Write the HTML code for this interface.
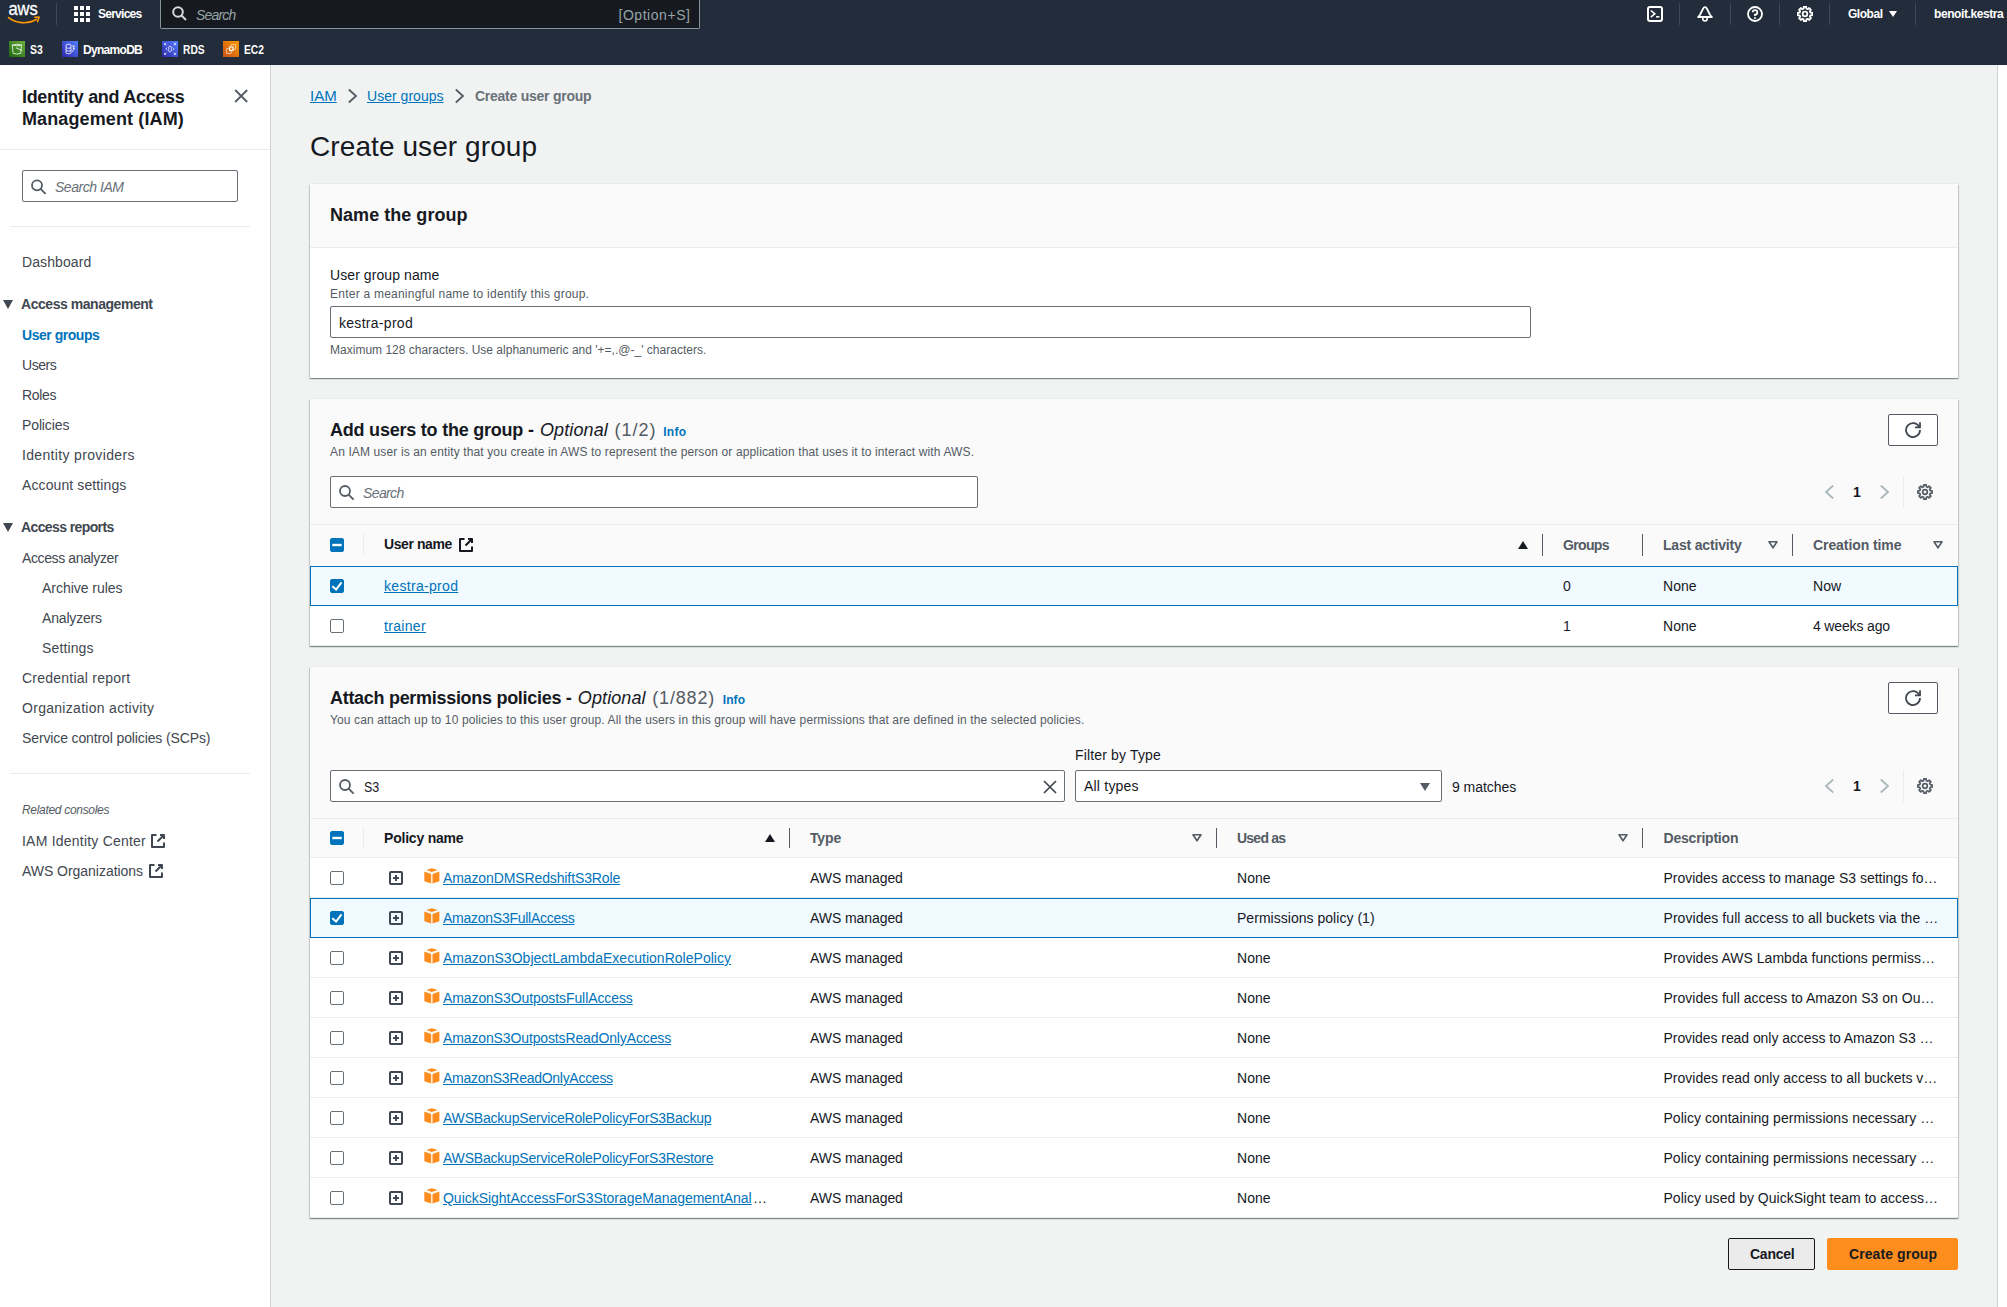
<!DOCTYPE html>
<html>
<head>
<meta charset="utf-8">
<title>Create user group | IAM</title>
<style>
*{box-sizing:border-box;margin:0;padding:0}
html,body{width:2007px;height:1307px;overflow:hidden;background:#f1f3f2;font-family:"Liberation Sans",sans-serif;font-size:14px;color:#16191f}
.abs{position:absolute;white-space:nowrap}
a{color:#0073bb;text-decoration:underline}
/* ---------- top nav ---------- */
#nav{position:absolute;left:0;top:0;width:2007px;height:65px;background:#222c3a}
#nav .t{position:absolute;color:#fff;font-weight:bold;font-size:12px;line-height:16px;white-space:nowrap}
#nav .sep{position:absolute;width:1px;background:#3c4757}
#srch{position:absolute;left:160px;top:0;width:540px;height:29px;background:#16191f;border:1px solid #879596;border-top:none;border-radius:0 0 2px 2px}
/* ---------- sidebar ---------- */
#side{position:absolute;left:0;top:65px;width:271px;height:1242px;background:#fff;border-right:1px solid #cdd2d4}
#side .it{position:absolute;left:22px;font-size:14px;line-height:20px;color:#414750;white-space:nowrap}
#side .hd{position:absolute;left:21px;font-size:14px;line-height:20px;color:#414750;font-weight:bold;white-space:nowrap}
#side .hr{position:absolute;height:1px;background:#eaeded}
.tri{position:absolute;width:0;height:0;border-left:5.5px solid transparent;border-right:5.5px solid transparent;border-top:9px solid #414750}
/* ---------- right strip ---------- */
#rstrip{position:absolute;left:1997px;top:65px;width:10px;height:1242px;background:#fff;border-left:1px solid #cdd2d4}
/* ---------- cards ---------- */
.card{position:absolute;left:310px;width:1648px;background:#fff;box-shadow:0 -1px 0 0 #e9ecec,0 1px 1px 0 rgba(0,28,36,.28),1px 1px 1px 0 rgba(0,28,36,.15),-1px 1px 1px 0 rgba(0,28,36,.15)}
.chead{position:absolute;left:0;top:0;width:100%;background:#fafafa;border-bottom:1px solid #eaeded}
.h2{position:absolute;font-size:18px;line-height:22px;font-weight:bold;color:#16191f;white-space:nowrap}
.h2 i{font-weight:normal}
.h2 .cnt{font-weight:normal;color:#545b64}
.info{position:absolute;font-size:12px;font-weight:bold;color:#0073bb;white-space:nowrap}
.desc{position:absolute;font-size:12px;line-height:16px;color:#545b64;white-space:nowrap}
.inp{position:absolute;height:31px;background:#fff;border:1px solid #687078;border-radius:2px}
.btn{position:absolute;border:1px solid #545b64;border-radius:2px;background:#fff}
.th{position:absolute;font-weight:bold;font-size:14px;line-height:20px;color:#545b64;white-space:nowrap}
.th.dk{color:#16191f}
.td{position:absolute;font-size:14px;line-height:20px;color:#16191f;white-space:nowrap}
.vsep{position:absolute;width:1px;height:20px;background:#545b64}
.row{position:absolute;left:0;width:1648px;height:40px;border-bottom:1px solid #eaeded;background:#fff}
.row.sel{background:#f1faff;border:1px solid #0073bb;z-index:2}
.cb{position:absolute;width:14px;height:14px;border:1px solid #687078;border-radius:2px;background:#fff}
.cb.on{background:#0073bb;border-color:#0073bb}
.up{position:absolute;width:0;height:0;border-left:5px solid transparent;border-right:5px solid transparent;border-bottom:8px solid #16191f}
</style>
</head>
<body>
<div id="nav">
<svg class="abs" style="left:6px;top:0px" width="36" height="28" viewBox="0 0 36 28">
<text x="2.400" y="15" font-family="Liberation Sans" font-size="19" fill="#fff" stroke="#fff" stroke-width="0.300" textLength="29.500" lengthAdjust="spacingAndGlyphs">aws</text>
<path d="M2.600 17.600 C9 22.800 21 25.200 30.500 19.300" stroke="#f90" stroke-width="1.700" fill="none" stroke-linecap="round"/>
<path d="M28.800 17.300 L33.200 17.100 L31.600 21.800" stroke="#f90" stroke-width="1.500" fill="none" stroke-linecap="round" stroke-linejoin="round"/>
</svg>
<div class="sep" style="left:56px;top:3px;height:22px"></div>
<div class="sep" style="left:1679px;top:3px;height:22px"></div>
<div class="sep" style="left:1730px;top:3px;height:22px"></div>
<div class="sep" style="left:1779px;top:3px;height:22px"></div>
<div class="sep" style="left:1829px;top:3px;height:22px"></div>
<div class="sep" style="left:1915px;top:3px;height:22px"></div>
<svg class="abs" style="left:74px;top:6px" width="16" height="16" viewBox="0 0 16 16" fill="#fff">
<rect x="0" y="0" width="4" height="4"/><rect x="6" y="0" width="4" height="4"/><rect x="12" y="0" width="4" height="4"/>
<rect x="0" y="6" width="4" height="4"/><rect x="6" y="6" width="4" height="4"/><rect x="12" y="6" width="4" height="4"/>
<rect x="0" y="12" width="4" height="4"/><rect x="6" y="12" width="4" height="4"/><rect x="12" y="12" width="4" height="4"/>
</svg>
<div class="t" style="left:98px;top:6px;letter-spacing:-0.743px">Services</div>
<div id="srch">
<svg class="abs" style="left:11px;top:6px" width="16" height="16" viewBox="0 0 16 16" fill="none" stroke="#d5dbdb" stroke-width="2"><circle cx="6" cy="6" r="4.800"/><path d="M9.500 9.500 L14 14"/></svg>
<div class="abs" style="left:35px;top:6px;font-size:14px;line-height:18px;font-style:italic;color:#95a5a6;letter-spacing:-0.814px">Search</div>
<div class="abs" style="left:457.500px;top:6px;font-size:14px;line-height:18px;color:#95a5a6;letter-spacing:0.539px">[Option+S]</div>
</div>
<svg class="abs" style="left:1647px;top:6px" width="16" height="16" viewBox="0 0 16 16" fill="none" stroke="#fff" stroke-width="2" stroke-linejoin="round"><rect x="1" y="1" width="14" height="14" rx="2"/><path d="M3.800 4.500 L7.800 7.800 L3.800 11.200" stroke-width="1.600" stroke-linejoin="miter"/><path d="M9 10.800 H12.400" stroke-width="1.500"/></svg>
<svg class="abs" style="left:1697px;top:6px" width="16" height="16" viewBox="0 0 16 16" fill="none" stroke="#fff" stroke-width="1.800" stroke-linejoin="round"><path d="M8 1.100 C7 1.100 6.500 1.700 6.200 2.500 L2.900 9 L1.100 11 H14.900 L13.100 9 L9.800 2.500 C9.500 1.700 9 1.100 8 1.100 Z"/><path d="M5.800 12 V12.800 A2.200 2.200 0 0 0 10.200 12.800 V12" stroke-width="1.600"/></svg>
<svg class="abs" style="left:1747px;top:6px" width="16" height="16" viewBox="0 0 16 16" fill="none" stroke="#fff" stroke-width="1.800"><circle cx="8" cy="8" r="7"/><path d="M5.700 6.300 A2.300 2.300 0 1 1 8 8.700 V9.900" stroke-width="1.800"/><circle cx="8" cy="12" r="0.600" fill="#fff" stroke-width="1"/></svg>
<svg class="abs" style="left:1797px;top:6px" width="16" height="16" viewBox="0 0 16 16" fill="none" stroke="#fff" stroke-width="1.800" stroke-linejoin="round"><path d="M6.59 2.68 L6.76 0.81 L9.24 0.81 L9.41 2.68 L10.76 3.24 L12.21 2.04 L13.96 3.79 L12.76 5.24 L13.32 6.59 L15.19 6.76 L15.19 9.24 L13.32 9.41 L12.76 10.76 L13.96 12.21 L12.21 13.96 L10.76 12.76 L9.41 13.32 L9.24 15.19 L6.76 15.19 L6.59 13.32 L5.24 12.76 L3.79 13.96 L2.04 12.21 L3.24 10.76 L2.68 9.41 L0.81 9.24 L0.81 6.76 L2.68 6.59 L3.24 5.24 L2.04 3.79 L3.79 2.04 L5.24 3.24 Z"/><circle cx="8" cy="8" r="2.300"/></svg>
<div class="t" style="left:1848px;top:6px;letter-spacing:-0.460px">Global</div>
<div class="abs" style="left:1889px;top:11px;width:0;height:0;border-left:4.200px solid transparent;border-right:4.200px solid transparent;border-top:6.500px solid #fff"></div>
<div class="t" style="left:1934px;top:6px;letter-spacing:-0.410px">benoit.kestra</div>
<svg class="abs" style="left:9px;top:41px" width="16" height="16" viewBox="0 0 16 16"><defs><linearGradient id="g1" x1="0" y1="1" x2="1" y2="0"><stop offset="0" stop-color="#1b660f"/><stop offset="1" stop-color="#6cae3e"/></linearGradient><linearGradient id="g2" x1="0" y1="1" x2="1" y2="0"><stop offset="0" stop-color="#2e27ad"/><stop offset="1" stop-color="#527fff"/></linearGradient><linearGradient id="g3" x1="0" y1="1" x2="1" y2="0"><stop offset="0" stop-color="#c8511b"/><stop offset="1" stop-color="#f90"/></linearGradient></defs><rect width="16" height="16" fill="url(#g1)"/><path d="M3.300 4 Q8 2.600 12.500 4 L11.700 12.300 Q8 13.900 4.100 12.300 Z M3.300 4 Q8 5.800 12.500 4 M7 6.800 L13.200 9.600" fill="none" stroke="#fff" stroke-opacity="0.850" stroke-width="0.900"/></svg>
<div class="t" style="left:30px;top:41.5px;transform:scaleX(0.866);transform-origin:0 0">S3</div>
<svg class="abs" style="left:62px;top:41px" width="16" height="16" viewBox="0 0 16 16"><rect width="16" height="16" fill="url(#g2)"/><path d="M4 4 C4 3 9 3 9 4 V12 C9 13 4 13 4 12 Z M4 6.500 C4 7.500 9 7.500 9 6.500 M4 9.300 C4 10.300 9 10.300 9 9.300 M10 5 H12.500 L11 7.500 H12.500 L10 11" fill="none" stroke="#fff" stroke-width="0.800"/></svg>
<div class="t" style="left:83px;top:41.5px;letter-spacing:-0.701px">DynamoDB</div>
<svg class="abs" style="left:162px;top:41px" width="16" height="16" viewBox="0 0 16 16"><rect width="16" height="16" fill="url(#g2)"/><path d="M6.700 5.900 C6.700 5 9.300 5 9.300 5.900 V10.100 C9.300 11 6.700 11 6.700 10.100 Z M5.200 6.600 L3.800 8 L5.200 9.400 M10.800 6.600 L12.200 8 L10.800 9.400 M2.600 4.200 V2.600 H4.200 M2.600 2.600 L4.400 4.400 M13.400 4.200 V2.600 H11.800 M13.400 2.600 L11.600 4.400 M2.600 11.800 V13.400 H4.200 M2.600 13.400 L4.400 11.600 M13.400 11.800 V13.400 H11.800 M13.400 13.400 L11.600 11.600" fill="none" stroke="#fff" stroke-opacity="0.900" stroke-width="0.800"/></svg>
<div class="t" style="left:183px;top:41.5px;transform:scaleX(0.853);transform-origin:0 0">RDS</div>
<svg class="abs" style="left:223px;top:41px" width="16" height="16" viewBox="0 0 16 16"><rect width="16" height="16" fill="url(#g3)"/><path d="M6.600 6 H10 V9.400 H6.600 Z" fill="none" stroke="#fff" stroke-width="1.100"/><path d="M8 6 V3.600 H12.600 V8.200 H10 M6.600 7.700 H3.400 V12.400 H8.200 V9.400" fill="none" stroke="#fff" stroke-opacity="0.700" stroke-width="0.800"/></svg>
<div class="t" style="left:244px;top:41.5px;transform:scaleX(0.853);transform-origin:0 0">EC2</div>
</div>
<div id="side">
<div class="abs" style="left:22px;top:21px;font-size:18px;line-height:22px;font-weight:bold;color:#16191f;letter-spacing:-0.314px">Identity and Access</div>
<div class="abs" style="left:22px;top:43px;font-size:18px;line-height:22px;font-weight:bold;color:#16191f;letter-spacing:0.119px">Management (IAM)</div>
<svg class="abs" style="left:233px;top:23px" width="16" height="16" viewBox="0 0 16 16" fill="none" stroke="#545b64" stroke-width="1.800"><path d="M2.200 2 L14.200 14 M14.200 2 L2.200 14"/></svg>
<div class="hr" style="left:0;top:84px;width:270px"></div>
<div class="inp" style="left:22px;top:105px;width:216px;height:32px"><svg class="abs" style="left:8px;top:8px" width="16" height="16" viewBox="0 0 16 16" fill="none" stroke="#545b64" stroke-width="1.800"><circle cx="6" cy="6.300" r="5"/><path d="M9.600 9.900 L14.600 14.900"/></svg><div class="abs" style="left:32px;top:6px;font-style:italic;color:#687078;line-height:20px;letter-spacing:-0.464px">Search IAM</div></div>
<div class="hr" style="left:10px;top:161px;width:240px"></div>
<div class="it" style="left:22px;top:187px;letter-spacing:0.087px">Dashboard</div>
<div class="it" style="left:22px;top:260px;color:#0073bb;font-weight:bold;letter-spacing:-0.468px">User groups</div>
<div class="it" style="left:22px;top:290px;letter-spacing:-0.440px">Users</div>
<div class="it" style="left:22px;top:320px;letter-spacing:-0.348px">Roles</div>
<div class="it" style="left:22px;top:350px;letter-spacing:-0.120px">Policies</div>
<div class="it" style="left:22px;top:380px;letter-spacing:0.341px">Identity providers</div>
<div class="it" style="left:22px;top:410px;letter-spacing:0.105px">Account settings</div>
<div class="it" style="left:22px;top:483px;letter-spacing:-0.383px">Access analyzer</div>
<div class="it" style="left:42px;top:513px;letter-spacing:-0.026px">Archive rules</div>
<div class="it" style="left:42px;top:543px;letter-spacing:-0.171px">Analyzers</div>
<div class="it" style="left:42px;top:573px;letter-spacing:0.131px">Settings</div>
<div class="it" style="left:22px;top:603px;letter-spacing:0.238px">Credential report</div>
<div class="it" style="left:22px;top:633px;letter-spacing:0.292px">Organization activity</div>
<div class="it" style="left:22px;top:663px;letter-spacing:-0.124px">Service control policies (SCPs)</div>
<div class="it" style="left:22px;top:766px;letter-spacing:0.219px">IAM Identity Center</div>
<div class="it" style="left:22px;top:796px;letter-spacing:-0.034px">AWS Organizations</div>
<div class="tri" style="left:3px;top:235px"></div><div class="hd" style="top:229px;letter-spacing:-0.458px">Access management</div>
<div class="tri" style="left:3px;top:458px"></div><div class="hd" style="top:452px;letter-spacing:-0.606px">Access reports</div>
<div class="hr" style="left:10px;top:708px;width:240px"></div>
<div class="abs" style="left:22px;top:737px;font-size:12px;line-height:16px;font-style:italic;color:#545b64;letter-spacing:-0.310px">Related consoles</div>
<svg class="abs" style="left:150px;top:768px" width="16" height="16" viewBox="0 0 16 16" fill="none" stroke="#414750" stroke-width="2" stroke-linejoin="round"><path d="M14 9.500 V14 H2 V2 H6.500"/><path d="M10 2 H14 V6 M14 2 L7.500 8.500"/></svg>
<svg class="abs" style="left:148px;top:798px" width="16" height="16" viewBox="0 0 16 16" fill="none" stroke="#414750" stroke-width="2" stroke-linejoin="round"><path d="M14 9.500 V14 H2 V2 H6.500"/><path d="M10 2 H14 V6 M14 2 L7.500 8.500"/></svg>
</div>
<div id="rstrip"></div>
<div id="main">
<a class="abs" style="left:310px;top:86px;line-height:20px;transform:scaleX(1.076);transform-origin:0 0">IAM</a>
<svg class="abs" style="left:344px;top:88px" width="16" height="16" viewBox="0 0 16 16" fill="none" stroke="#545b64" stroke-width="1.800"><path d="M4.800 1.500 L12 8 L4.800 14.500"/></svg>
<a class="abs" style="left:367px;top:86px;line-height:20px;letter-spacing:0.025px">User groups</a>
<svg class="abs" style="left:451px;top:88px" width="16" height="16" viewBox="0 0 16 16" fill="none" stroke="#545b64" stroke-width="1.800"><path d="M4.800 1.500 L12 8 L4.800 14.500"/></svg>
<div class="abs" style="left:475px;top:86px;line-height:20px;font-weight:bold;color:#687078;letter-spacing:-0.252px">Create user group</div>
<div class="abs" style="left:310px;top:128.5px;line-height:36px;font-size:28px;color:#16191f;letter-spacing:0.087px">Create user group</div>
<div class="card" style="top:184px;height:194px">
<div class="chead" style="height:64px"></div>
<div class="h2" style="left:20px;top:20px;line-height:22px;letter-spacing:0.037px">Name the group</div>
<div class="abs" style="left:20px;top:81px;line-height:20px;letter-spacing:0.080px">User group name</div>
<div class="desc" style="left:20px;top:102px;line-height:16px;letter-spacing:0.235px">Enter a meaningful name to identify this group.</div>
<div class="inp" style="left:20px;top:122px;width:1201px;height:32px"><div class="abs" style="left:8px;top:6px;line-height:20px;letter-spacing:0.288px">kestra-prod</div></div>
<div class="desc" style="left:20px;top:158px;line-height:16px;letter-spacing:0.011px">Maximum 128 characters. Use alphanumeric and '+=,.@-_' characters.</div>
</div>
<div class="card" style="top:399px;height:247px">
<div class="chead" style="height:125px;border-bottom:none"></div>
<div class="h2" style="left:20px;top:20px;line-height:22px;letter-spacing:-0.222px">Add users to the group -</div>
<div class="h2" style="left:230px;top:20px;line-height:22px;font-weight:normal;font-style:italic;letter-spacing:0.108px">Optional</div>
<div class="h2" style="left:304.4px;top:20px;line-height:22px;font-weight:normal;color:#545b64;letter-spacing:1.046px">(1/2)</div>
<div class="info" style="left:353.20000000000005px;top:26px;line-height:14px;letter-spacing:0.280px">Info</div>
<div class="desc" style="left:20px;top:45px;line-height:16px;letter-spacing:0.127px">An IAM user is an entity that you create in AWS to represent the person or application that uses it to interact with AWS.</div>
<div class="btn" style="left:1578px;top:15px;width:50px;height:32px"><svg class="abs" style="left:16px;top:7px" width="16" height="16" viewBox="0 0 16 16" fill="none" stroke="#414750" stroke-width="1.800"><path d="M10 5.300 H15 V0.300"/><path d="M15 8 A7 7 0 1 1 14.300 5"/></svg></div>
<div class="inp" style="left:20px;top:77px;width:648px;height:32px"><svg class="abs" style="left:8px;top:8px" width="16" height="16" viewBox="0 0 16 16" fill="none" stroke="#545b64" stroke-width="1.800"><circle cx="6" cy="6" r="5"/><path d="M9.600 9.600 L14.600 14.600"/></svg><div class="abs" style="left:32px;top:6px;line-height:20px;font-style:italic;color:#687078;letter-spacing:-0.614px">Search</div></div>
<svg class="abs" style="left:1512px;top:85px" width="16" height="16" viewBox="0 0 16 16" fill="none" stroke="#aab7b8" stroke-width="1.800"><path d="M11.200 1.500 L4 8 L11.200 14.500"/></svg>
<div class="abs" style="left:1543px;top:83px;line-height:20px;font-weight:bold;color:#16191f;">1</div>
<svg class="abs" style="left:1566px;top:85px" width="16" height="16" viewBox="0 0 16 16" fill="none" stroke="#aab7b8" stroke-width="1.800"><path d="M4.800 1.500 L12 8 L4.800 14.500"/></svg>
<div class="abs" style="left:1593px;top:77px;width:1px;height:32px;background:#eaeded"></div>
<svg class="abs" style="left:1607px;top:85px" width="16" height="16" viewBox="0 0 16 16" fill="none" stroke="#545b64" stroke-width="1.700" stroke-linejoin="round"><path d="M6.61 2.78 L6.78 0.90 L9.22 0.90 L9.39 2.78 L10.71 3.33 L12.16 2.12 L13.88 3.84 L12.67 5.29 L13.22 6.61 L15.10 6.78 L15.10 9.22 L13.22 9.39 L12.67 10.71 L13.88 12.16 L12.16 13.88 L10.71 12.67 L9.39 13.22 L9.22 15.10 L6.78 15.10 L6.61 13.22 L5.29 12.67 L3.84 13.88 L2.12 12.16 L3.33 10.71 L2.78 9.39 L0.90 9.22 L0.90 6.78 L2.78 6.61 L3.33 5.29 L2.12 3.84 L3.84 2.12 L5.29 3.33 Z"/><circle cx="8" cy="8" r="2.300"/></svg>
<div class="abs" style="left:0;top:125px;width:1648px;height:42px;background:#fafafa;border-top:1px solid #eaeded"></div>
<div class="cb on" style="left:20px;top:139px"><svg class="abs" style="left:-1px;top:-1px" width="14" height="14" viewBox="0 0 14 14" fill="none" stroke="#fff" stroke-width="2.4"><path d="M2.300 7 H11.700"/></svg></div>
<div class="abs" style="left:53px;top:135px;width:1px;height:22px;background:#eaeded"></div>
<div class="th dk" style="left:74px;top:134.5px;line-height:20px;letter-spacing:-0.413px">User name</div>
<svg class="abs" style="left:148px;top:138px" width="16" height="16" viewBox="0 0 16 16" fill="none" stroke="#16191f" stroke-width="2" stroke-linejoin="round"><path d="M14 9.500 V14 H2 V2 H6.500"/><path d="M10 2 H14 V6 M14 2 L7.500 8.500"/></svg>
<div class="up" style="left:1208px;top:141.5px"></div>
<div class="vsep" style="left:1232px;top:135px;height:22px"></div>
<div class="vsep" style="left:1332px;top:135px;height:22px"></div>
<div class="vsep" style="left:1482px;top:135px;height:22px"></div>
<div class="th" style="left:1253px;top:135.5px;line-height:20px;letter-spacing:-0.659px">Groups</div>
<div class="th" style="left:1353px;top:135.5px;line-height:20px;letter-spacing:-0.186px">Last activity</div>
<svg class="abs" style="left:1458px;top:142.29999999999995px" width="10" height="8" viewBox="0 0 10 8" fill="none" stroke="#545b64" stroke-width="1.600" stroke-linejoin="round"><path d="M1 0.800 H9 L5 6.800 Z"/></svg>
<div class="th" style="left:1503px;top:135.5px;line-height:20px;letter-spacing:-0.081px">Creation time</div>
<svg class="abs" style="left:1623px;top:142.29999999999995px" width="10" height="8" viewBox="0 0 10 8" fill="none" stroke="#545b64" stroke-width="1.600" stroke-linejoin="round"><path d="M1 0.800 H9 L5 6.800 Z"/></svg>
<div class="row sel" style="top:167px">
<div class="cb on" style="left:19px;top:12px"><svg class="abs" style="left:-1px;top:-1px" width="14" height="14" viewBox="0 0 14 14" fill="none" stroke="#fff" stroke-width="2"><path d="M2.300 7.200 L6.100 10.600 L11.500 3.300"/></svg></div>
<a class="td" style="left:73px;top:9px;line-height:20px;color:#0073bb;letter-spacing:0.318px">kestra-prod</a>
<div class="td" style="left:1252px;top:9px;line-height:20px;">0</div>
<div class="td" style="left:1352px;top:9px;line-height:20px;letter-spacing:0.039px">None</div>
<div class="td" style="left:1502px;top:9px;line-height:20px;transform:scaleX(1.004);transform-origin:0 0">Now</div>
</div>
<div class="row" style="top:207px">
<div class="cb" style="left:20px;top:13px"></div>
<a class="td" style="left:74px;top:10px;line-height:20px;color:#0073bb;letter-spacing:0.313px">trainer</a>
<div class="td" style="left:1253px;top:10px;line-height:20px;">1</div>
<div class="td" style="left:1353px;top:10px;line-height:20px;letter-spacing:0.039px">None</div>
<div class="td" style="left:1503px;top:10px;line-height:20px;letter-spacing:-0.152px">4 weeks ago</div>
</div>
</div>
<div class="card" style="top:667px;height:551px">
<div class="chead" style="height:151px;border-bottom:none"></div>
<div class="h2" style="left:20px;top:20px;line-height:22px;letter-spacing:-0.295px">Attach permissions policies -</div>
<div class="h2" style="left:267.79999999999995px;top:20px;line-height:22px;font-weight:normal;font-style:italic;letter-spacing:0.108px">Optional</div>
<div class="h2" style="left:342.29999999999995px;top:20px;line-height:22px;font-weight:normal;color:#545b64;letter-spacing:0.827px">(1/882)</div>
<div class="info" style="left:412.70000000000005px;top:26px;line-height:14px;letter-spacing:0.113px">Info</div>
<div class="desc" style="left:20px;top:45px;line-height:16px;letter-spacing:0.122px">You can attach up to 10 policies to this user group. All the users in this group will have permissions that are defined in the selected policies.</div>
<div class="btn" style="left:1578px;top:15px;width:50px;height:32px"><svg class="abs" style="left:16px;top:7px" width="16" height="16" viewBox="0 0 16 16" fill="none" stroke="#414750" stroke-width="1.800"><path d="M10 5.300 H15 V0.300"/><path d="M15 8 A7 7 0 1 1 14.300 5"/></svg></div>
<div class="abs" style="left:765px;top:78px;line-height:20px;letter-spacing:0.158px">Filter by Type</div>
<div class="inp" style="left:20px;top:103px;width:735px;height:32px"><svg class="abs" style="left:8px;top:8px" width="16" height="16" viewBox="0 0 16 16" fill="none" stroke="#545b64" stroke-width="1.800"><circle cx="6" cy="6" r="5"/><path d="M9.600 9.600 L14.600 14.600"/></svg><div class="abs" style="left:32.5px;top:5.5px;line-height:20px;transform:scaleX(0.888);transform-origin:0 0">S3</div><svg class="abs" style="left:711px;top:7.500px" width="16" height="16" viewBox="0 0 16 16" fill="none" stroke="#414750" stroke-width="1.700"><path d="M2 2 L14 14 M14 2 L2 14"/></svg></div>
<div class="inp" style="left:765px;top:103px;width:367px;height:32px"><div class="abs" style="left:8px;top:4.5px;line-height:20px;letter-spacing:0.211px">All types</div><div class="abs" style="left:344px;top:11.500px;width:0;height:0;border-left:5px solid transparent;border-right:5px solid transparent;border-top:8.500px solid #545b64"></div></div>
<div class="abs" style="left:1142px;top:110px;line-height:20px;letter-spacing:-0.036px">9 matches</div>
<svg class="abs" style="left:1512px;top:111px" width="16" height="16" viewBox="0 0 16 16" fill="none" stroke="#aab7b8" stroke-width="1.800"><path d="M11.200 1.500 L4 8 L11.200 14.500"/></svg>
<div class="abs" style="left:1543px;top:109px;line-height:20px;font-weight:bold;color:#16191f;">1</div>
<svg class="abs" style="left:1566px;top:111px" width="16" height="16" viewBox="0 0 16 16" fill="none" stroke="#aab7b8" stroke-width="1.800"><path d="M4.800 1.500 L12 8 L4.800 14.500"/></svg>
<div class="abs" style="left:1593px;top:103px;width:1px;height:32px;background:#eaeded"></div>
<svg class="abs" style="left:1607px;top:111px" width="16" height="16" viewBox="0 0 16 16" fill="none" stroke="#545b64" stroke-width="1.700" stroke-linejoin="round"><path d="M6.61 2.78 L6.78 0.90 L9.22 0.90 L9.39 2.78 L10.71 3.33 L12.16 2.12 L13.88 3.84 L12.67 5.29 L13.22 6.61 L15.10 6.78 L15.10 9.22 L13.22 9.39 L12.67 10.71 L13.88 12.16 L12.16 13.88 L10.71 12.67 L9.39 13.22 L9.22 15.10 L6.78 15.10 L6.61 13.22 L5.29 12.67 L3.84 13.88 L2.12 12.16 L3.33 10.71 L2.78 9.39 L0.90 9.22 L0.90 6.78 L2.78 6.61 L3.33 5.29 L2.12 3.84 L3.84 2.12 L5.29 3.33 Z"/><circle cx="8" cy="8" r="2.300"/></svg>
<div class="abs" style="left:0;top:151px;width:1648px;height:40px;background:#fafafa;border-top:1px solid #eaeded;border-bottom:1px solid #eaeded"></div>
<div class="cb on" style="left:20px;top:164px"><svg class="abs" style="left:-1px;top:-1px" width="14" height="14" viewBox="0 0 14 14" fill="none" stroke="#fff" stroke-width="2.4"><path d="M2.300 7 H11.700"/></svg></div>
<div class="abs" style="left:53px;top:160px;width:1px;height:22px;background:#eaeded"></div>
<div class="th dk" style="left:74px;top:161px;line-height:20px;letter-spacing:-0.212px">Policy name</div>
<div class="up" style="left:455px;top:166.5px"></div>
<div class="vsep" style="left:479px;top:161px"></div>
<div class="vsep" style="left:906px;top:161px"></div>
<div class="vsep" style="left:1332px;top:161px"></div>
<div class="th" style="left:500px;top:161px;line-height:20px;letter-spacing:-0.150px">Type</div>
<svg class="abs" style="left:882px;top:167.29999999999995px" width="10" height="8" viewBox="0 0 10 8" fill="none" stroke="#545b64" stroke-width="1.600" stroke-linejoin="round"><path d="M1 0.800 H9 L5 6.800 Z"/></svg>
<div class="th" style="left:927px;top:161px;line-height:20px;letter-spacing:-0.768px">Used as</div>
<svg class="abs" style="left:1308px;top:167.29999999999995px" width="10" height="8" viewBox="0 0 10 8" fill="none" stroke="#545b64" stroke-width="1.600" stroke-linejoin="round"><path d="M1 0.800 H9 L5 6.800 Z"/></svg>
<div class="th" style="left:1353.5px;top:161px;line-height:20px;letter-spacing:-0.206px">Description</div>
<div class="row" style="top:191px">
<div class="cb" style="left:20px;top:13px"></div>
<svg class="abs" style="left:78px;top:12px" width="16" height="16" viewBox="0 0 16 16" fill="none" stroke="#414750" stroke-width="2"><rect x="2" y="2" width="12" height="12" rx="1"/><path d="M8 5 V11 M5 8 H11"/></svg>
<svg class="abs" style="left:113.5px;top:9.5px" width="16" height="16" viewBox="0 0 16 16" fill="#fc8c1e"><path d="M7.850 0.300 L13.900 2.100 L7.850 4.100 L2.200 2.100 Z"/><path d="M0.300 3.500 L7.200 5.900 V15.500 L0.300 13.200 Z"/><path d="M15.400 3.500 L8.500 5.900 V15.500 L15.400 13.200 Z"/></svg>
<a class="td" style="left:133px;top:10px;line-height:20px;color:#0073bb;letter-spacing:-0.112px">AmazonDMSRedshiftS3Role</a>
<div class="td" style="left:500px;top:10px;line-height:20px;letter-spacing:-0.075px">AWS managed</div>
<div class="td" style="left:927px;top:10px;line-height:20px;letter-spacing:0.039px">None</div>
<div class="td" style="left:1353.5px;top:10px;line-height:20px;letter-spacing:-0.015px">Provides access to manage S3 settings fo…</div>
</div>
<div class="row sel" style="top:231px">
<div class="cb on" style="left:19px;top:12px"><svg class="abs" style="left:-1px;top:-1px" width="14" height="14" viewBox="0 0 14 14" fill="none" stroke="#fff" stroke-width="2"><path d="M2.300 7.200 L6.100 10.600 L11.500 3.300"/></svg></div>
<svg class="abs" style="left:77px;top:11px" width="16" height="16" viewBox="0 0 16 16" fill="none" stroke="#414750" stroke-width="2"><rect x="2" y="2" width="12" height="12" rx="1"/><path d="M8 5 V11 M5 8 H11"/></svg>
<svg class="abs" style="left:112.5px;top:8.5px" width="16" height="16" viewBox="0 0 16 16" fill="#fc8c1e"><path d="M7.850 0.300 L13.900 2.100 L7.850 4.100 L2.200 2.100 Z"/><path d="M0.300 3.500 L7.200 5.900 V15.500 L0.300 13.200 Z"/><path d="M15.400 3.500 L8.500 5.900 V15.500 L15.400 13.200 Z"/></svg>
<a class="td" style="left:132px;top:9px;line-height:20px;color:#0073bb;letter-spacing:-0.257px">AmazonS3FullAccess</a>
<div class="td" style="left:499px;top:9px;line-height:20px;letter-spacing:-0.075px">AWS managed</div>
<div class="td" style="left:926px;top:9px;line-height:20px;letter-spacing:0.030px">Permissions policy (1)</div>
<div class="td" style="left:1352.5px;top:9px;line-height:20px;letter-spacing:0.054px">Provides full access to all buckets via the …</div>
</div>
<div class="row" style="top:271px">
<div class="cb" style="left:20px;top:13px"></div>
<svg class="abs" style="left:78px;top:12px" width="16" height="16" viewBox="0 0 16 16" fill="none" stroke="#414750" stroke-width="2"><rect x="2" y="2" width="12" height="12" rx="1"/><path d="M8 5 V11 M5 8 H11"/></svg>
<svg class="abs" style="left:113.5px;top:9.5px" width="16" height="16" viewBox="0 0 16 16" fill="#fc8c1e"><path d="M7.850 0.300 L13.900 2.100 L7.850 4.100 L2.200 2.100 Z"/><path d="M0.300 3.500 L7.200 5.900 V15.500 L0.300 13.200 Z"/><path d="M15.400 3.500 L8.500 5.900 V15.500 L15.400 13.200 Z"/></svg>
<a class="td" style="left:133px;top:10px;line-height:20px;color:#0073bb;letter-spacing:0.022px">AmazonS3ObjectLambdaExecutionRolePolicy</a>
<div class="td" style="left:500px;top:10px;line-height:20px;letter-spacing:-0.075px">AWS managed</div>
<div class="td" style="left:927px;top:10px;line-height:20px;letter-spacing:0.039px">None</div>
<div class="td" style="left:1353.5px;top:10px;line-height:20px;letter-spacing:0.034px">Provides AWS Lambda functions permiss…</div>
</div>
<div class="row" style="top:311px">
<div class="cb" style="left:20px;top:13px"></div>
<svg class="abs" style="left:78px;top:12px" width="16" height="16" viewBox="0 0 16 16" fill="none" stroke="#414750" stroke-width="2"><rect x="2" y="2" width="12" height="12" rx="1"/><path d="M8 5 V11 M5 8 H11"/></svg>
<svg class="abs" style="left:113.5px;top:9.5px" width="16" height="16" viewBox="0 0 16 16" fill="#fc8c1e"><path d="M7.850 0.300 L13.900 2.100 L7.850 4.100 L2.200 2.100 Z"/><path d="M0.300 3.500 L7.200 5.900 V15.500 L0.300 13.200 Z"/><path d="M15.400 3.500 L8.500 5.900 V15.500 L15.400 13.200 Z"/></svg>
<a class="td" style="left:133px;top:10px;line-height:20px;color:#0073bb;letter-spacing:-0.096px">AmazonS3OutpostsFullAccess</a>
<div class="td" style="left:500px;top:10px;line-height:20px;letter-spacing:-0.075px">AWS managed</div>
<div class="td" style="left:927px;top:10px;line-height:20px;letter-spacing:0.039px">None</div>
<div class="td" style="left:1353.5px;top:10px;line-height:20px;letter-spacing:0.003px">Provides full access to Amazon S3 on Ou…</div>
</div>
<div class="row" style="top:351px">
<div class="cb" style="left:20px;top:13px"></div>
<svg class="abs" style="left:78px;top:12px" width="16" height="16" viewBox="0 0 16 16" fill="none" stroke="#414750" stroke-width="2"><rect x="2" y="2" width="12" height="12" rx="1"/><path d="M8 5 V11 M5 8 H11"/></svg>
<svg class="abs" style="left:113.5px;top:9.5px" width="16" height="16" viewBox="0 0 16 16" fill="#fc8c1e"><path d="M7.850 0.300 L13.900 2.100 L7.850 4.100 L2.200 2.100 Z"/><path d="M0.300 3.500 L7.200 5.900 V15.500 L0.300 13.200 Z"/><path d="M15.400 3.500 L8.500 5.900 V15.500 L15.400 13.200 Z"/></svg>
<a class="td" style="left:133px;top:10px;line-height:20px;color:#0073bb;letter-spacing:-0.127px">AmazonS3OutpostsReadOnlyAccess</a>
<div class="td" style="left:500px;top:10px;line-height:20px;letter-spacing:-0.075px">AWS managed</div>
<div class="td" style="left:927px;top:10px;line-height:20px;letter-spacing:0.039px">None</div>
<div class="td" style="left:1353.5px;top:10px;line-height:20px;letter-spacing:-0.062px">Provides read only access to Amazon S3 …</div>
</div>
<div class="row" style="top:391px">
<div class="cb" style="left:20px;top:13px"></div>
<svg class="abs" style="left:78px;top:12px" width="16" height="16" viewBox="0 0 16 16" fill="none" stroke="#414750" stroke-width="2"><rect x="2" y="2" width="12" height="12" rx="1"/><path d="M8 5 V11 M5 8 H11"/></svg>
<svg class="abs" style="left:113.5px;top:9.5px" width="16" height="16" viewBox="0 0 16 16" fill="#fc8c1e"><path d="M7.850 0.300 L13.900 2.100 L7.850 4.100 L2.200 2.100 Z"/><path d="M0.300 3.500 L7.200 5.900 V15.500 L0.300 13.200 Z"/><path d="M15.400 3.500 L8.500 5.900 V15.500 L15.400 13.200 Z"/></svg>
<a class="td" style="left:133px;top:10px;line-height:20px;color:#0073bb;letter-spacing:-0.274px">AmazonS3ReadOnlyAccess</a>
<div class="td" style="left:500px;top:10px;line-height:20px;letter-spacing:-0.075px">AWS managed</div>
<div class="td" style="left:927px;top:10px;line-height:20px;letter-spacing:0.039px">None</div>
<div class="td" style="left:1353.5px;top:10px;line-height:20px;letter-spacing:-0.002px">Provides read only access to all buckets v…</div>
</div>
<div class="row" style="top:431px">
<div class="cb" style="left:20px;top:13px"></div>
<svg class="abs" style="left:78px;top:12px" width="16" height="16" viewBox="0 0 16 16" fill="none" stroke="#414750" stroke-width="2"><rect x="2" y="2" width="12" height="12" rx="1"/><path d="M8 5 V11 M5 8 H11"/></svg>
<svg class="abs" style="left:113.5px;top:9.5px" width="16" height="16" viewBox="0 0 16 16" fill="#fc8c1e"><path d="M7.850 0.300 L13.900 2.100 L7.850 4.100 L2.200 2.100 Z"/><path d="M0.300 3.500 L7.200 5.900 V15.500 L0.300 13.200 Z"/><path d="M15.400 3.500 L8.500 5.900 V15.500 L15.400 13.200 Z"/></svg>
<a class="td" style="left:133px;top:10px;line-height:20px;color:#0073bb;letter-spacing:-0.198px">AWSBackupServiceRolePolicyForS3Backup</a>
<div class="td" style="left:500px;top:10px;line-height:20px;letter-spacing:-0.075px">AWS managed</div>
<div class="td" style="left:927px;top:10px;line-height:20px;letter-spacing:0.039px">None</div>
<div class="td" style="left:1353.5px;top:10px;line-height:20px;letter-spacing:0.037px">Policy containing permissions necessary …</div>
</div>
<div class="row" style="top:471px">
<div class="cb" style="left:20px;top:13px"></div>
<svg class="abs" style="left:78px;top:12px" width="16" height="16" viewBox="0 0 16 16" fill="none" stroke="#414750" stroke-width="2"><rect x="2" y="2" width="12" height="12" rx="1"/><path d="M8 5 V11 M5 8 H11"/></svg>
<svg class="abs" style="left:113.5px;top:9.5px" width="16" height="16" viewBox="0 0 16 16" fill="#fc8c1e"><path d="M7.850 0.300 L13.900 2.100 L7.850 4.100 L2.200 2.100 Z"/><path d="M0.300 3.500 L7.200 5.900 V15.500 L0.300 13.200 Z"/><path d="M15.400 3.500 L8.500 5.900 V15.500 L15.400 13.200 Z"/></svg>
<a class="td" style="left:133px;top:10px;line-height:20px;color:#0073bb;letter-spacing:-0.201px">AWSBackupServiceRolePolicyForS3Restore</a>
<div class="td" style="left:500px;top:10px;line-height:20px;letter-spacing:-0.075px">AWS managed</div>
<div class="td" style="left:927px;top:10px;line-height:20px;letter-spacing:0.039px">None</div>
<div class="td" style="left:1353.5px;top:10px;line-height:20px;letter-spacing:0.037px">Policy containing permissions necessary …</div>
</div>
<div class="row" style="top:511px">
<div class="cb" style="left:20px;top:13px"></div>
<svg class="abs" style="left:78px;top:12px" width="16" height="16" viewBox="0 0 16 16" fill="none" stroke="#414750" stroke-width="2"><rect x="2" y="2" width="12" height="12" rx="1"/><path d="M8 5 V11 M5 8 H11"/></svg>
<svg class="abs" style="left:113.5px;top:9.5px" width="16" height="16" viewBox="0 0 16 16" fill="#fc8c1e"><path d="M7.850 0.300 L13.900 2.100 L7.850 4.100 L2.200 2.100 Z"/><path d="M0.300 3.500 L7.200 5.900 V15.500 L0.300 13.200 Z"/><path d="M15.400 3.500 L8.500 5.900 V15.500 L15.400 13.200 Z"/></svg>
<a class="td" style="left:133px;top:10px;line-height:20px;color:#0073bb;letter-spacing:-0.025px">QuickSightAccessForS3StorageManagementAnal</a>
<div class="td" style="left:443px;top:10px;line-height:20px;">…</div>
<div class="td" style="left:500px;top:10px;line-height:20px;letter-spacing:-0.075px">AWS managed</div>
<div class="td" style="left:927px;top:10px;line-height:20px;letter-spacing:0.039px">None</div>
<div class="td" style="left:1353.5px;top:10px;line-height:20px;letter-spacing:0.013px">Policy used by QuickSight team to access…</div>
</div>
</div>
<div class="btn" style="left:1728px;top:1238px;width:87px;height:32px;background:#ebebeb;border-color:#16191f"><div class="abs" style="left:21px;top:5px;line-height:20px;font-weight:bold;color:#16191f;letter-spacing:-0.244px">Cancel</div></div>
<div class="btn" style="left:1827px;top:1238px;width:131px;height:32px;background:#fd8e1e;border-color:#fd8e1e"><div class="abs" style="left:21px;top:5px;line-height:20px;font-weight:bold;color:#16191f;letter-spacing:0.084px">Create group</div></div>
</div>
</body>
</html>
